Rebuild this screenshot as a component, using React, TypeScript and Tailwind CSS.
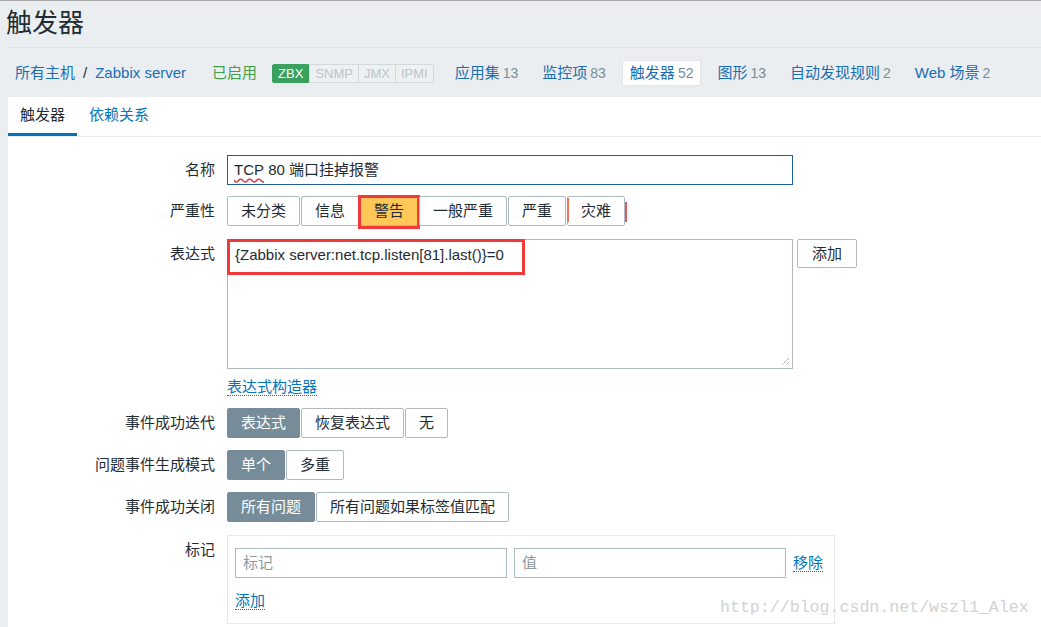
import React from "react";

const font = "font-['Liberation_Sans','Noto_Sans_CJK_SC',sans-serif]";

const navItems = [
  { label: "应用集", count: 13 },
  { label: "监控项", count: 83 },
  { label: "触发器", count: 52, active: true },
  { label: "图形", count: 13 },
  { label: "自动发现规则", count: 2 },
  { label: "Web 场景", count: 2 },
];

const severities = ["未分类", "信息", "警告", "一般严重", "严重", "灾难"];

function Row({
  label,
  className = "",
  children,
}: {
  label: string;
  className?: string;
  children: React.ReactNode;
}) {
  return (
    <div className={`flex items-start ${className}`}>
      <div className="w-[207px] shrink-0 text-right leading-[30px] text-[#1f2c33]">{label}</div>
      <div className="ml-[12px]">{children}</div>
    </div>
  );
}

function Segmented({ options, selected }: { options: string[]; selected: number }) {
  return (
    <div className="flex gap-px">
      {options.map((o, i) => (
        <div
          key={o}
          className={
            i === selected
              ? "h-[30px] rounded-[2px] border border-[#768d99] bg-[#768d99] px-[13px] leading-[28px] text-white"
              : "h-[30px] rounded-[2px] border border-[#acbbc2] bg-white px-[13px] leading-[28px] text-[#1f2c33]"
          }
        >
          {o}
        </div>
      ))}
    </div>
  );
}

function Link({ children }: { children: React.ReactNode }) {
  return (
    <span className="inline-block border-b border-dotted border-[#0275b8] leading-[17px] text-[#0275b8]">
      {children}
    </span>
  );
}

export default function App() {
  return (
    <div className={`relative min-h-screen overflow-hidden border-t border-[#a9a9a9] bg-[#ebeef0] text-[15px] ${font}`}>
      {/* Title */}
      <div className="ml-2 border-b border-[#dde2e5] pt-[4px] pb-[6px]">
        <h1 className="-ml-[2px] text-[26px] leading-[36px] text-[#1f2c33]">触发器</h1>
      </div>

      {/* Host breadcrumb + nav */}
      <div className="flex h-[49px] items-center pt-px pl-[15px] whitespace-nowrap">
        <span className="text-[#1b6db1]">所有主机</span>
        <span className="mx-[8px] text-[#1f2c33]">/</span>
        <span className="text-[#1b6db1]">Zabbix server</span>
        <span className="ml-[26px] text-[#429e47]">已启用</span>
        <div className="ml-[15px] flex text-[13px] leading-[17px]">
          <span className="rounded-l-[2px] border border-[#3aa05d] bg-[#3aa05d] px-[5px] text-white">ZBX</span>
          <span className="border border-[#d3d9dd] bg-[#eef1f2] px-[5px] text-[#bcc5cb]">SNMP</span>
          <span className="-ml-px border border-[#d3d9dd] bg-[#eef1f2] px-[5px] text-[#bcc5cb]">JMX</span>
          <span className="-ml-px rounded-r-[2px] border border-[#d3d9dd] bg-[#eef1f2] px-[5px] text-[#bcc5cb]">IPMI</span>
        </div>
        <div className="ml-[13px] flex gap-[8px]">
          {navItems.map((n) => (
            <div
              key={n.label}
              className={
                n.active
                  ? "rounded-[2px] border border-[#e2e6e8] bg-white px-[7px] py-[3px] leading-[18px]"
                  : "border border-transparent px-[7px] py-[3px] leading-[18px]"
              }
            >
              <span className="text-[#1b6db1]">{n.label}</span>
              <span className="ml-[3px] text-[14px] text-[#768d99]">{n.count}</span>
            </div>
          ))}
        </div>
      </div>

      {/* Main panel */}
      <div className="ml-2 min-h-[560px] bg-white">
        <div className="flex border-b border-[#ebeef0]">
          <div className="flex h-[39px] items-center border-b-[3px] border-[#0275b8] px-[12px] text-[#1f2c33]">触发器</div>
          <div className="flex h-[39px] items-center border-b-[3px] border-transparent px-[12px] text-[#0275b8]">依赖关系</div>
        </div>

        <div className="pt-[18px]">
          <Row label="名称">
            <div className="flex h-[30px] w-[566px] items-center border border-[#1f5f99] pl-[6px] text-[#1f2c33]">
              <span className="underline decoration-[#e53935] decoration-wavy underline-offset-[3px]">TCP</span>
              <span>&nbsp;80 端口挂掉报警</span>
            </div>
          </Row>

          <Row label="严重性" className="mt-[11px]">
            <div className="flex gap-px">
              {severities.map((s) => (
                <div
                  key={s}
                  className={
                    s === "警告"
                      ? "relative h-[30px] rounded-[2px] border border-[#acbbc2] bg-[#ffc859] px-[13px] leading-[28px] text-[#1f2c33]"
                      : "relative h-[30px] rounded-[2px] border border-[#acbbc2] bg-white px-[13px] leading-[28px] text-[#1f2c33]"
                  }
                >
                  {s}
                  {s === "警告" && (
                    <span className="absolute -top-[2px] -right-[3px] -bottom-[4px] -left-[3px] border-[3px] border-[#f03a3a]" />
                  )}
                  {s === "灾难" && (
                    <>
                      <span className="absolute top-[1px] -left-[1px] h-[24px] w-[2px] bg-[#e97659]" />
                      <span className="absolute top-[5px] -right-[3px] h-[20px] w-[2px] bg-[#e45959]" />
                    </>
                  )}
                </div>
              ))}
            </div>
          </Row>

          <Row label="表达式" className="mt-[13px]">
            <div className="flex items-start">
              <div className="relative h-[130px] w-[566px] border border-[#acbbc2] px-[7px] pt-[6px] leading-[18px] text-[#1f2c33]">
                {"{Zabbix server:net.tcp.listen[81].last()}=0"}
                <span className="absolute -top-px -left-px h-[36px] w-[298px] border-[3px] border-[#f03a3a]" />
                <svg className="absolute right-[2px] bottom-[2px]" width="10" height="10" viewBox="0 0 10 10">
                  <path d="M9 2 L2 9 M9 6 L6 9" stroke="#7a7a7a" strokeWidth="1" strokeDasharray="1 1" fill="none" />
                </svg>
              </div>
              <div className="ml-[4px] h-[29px] rounded-[2px] border border-[#acbbc2] bg-white px-[14px] leading-[27px] text-[#1f2c33]">
                添加
              </div>
            </div>
            <div className="mt-[9px] flex">
              <Link>表达式构造器</Link>
            </div>
          </Row>

          <Row label="事件成功迭代" className="mt-[12px]">
            <Segmented options={["表达式", "恢复表达式", "无"]} selected={0} />
          </Row>

          <Row label="问题事件生成模式" className="mt-[12px]">
            <Segmented options={["单个", "多重"]} selected={0} />
          </Row>

          <Row label="事件成功关闭" className="mt-[12px]">
            <Segmented options={["所有问题", "所有问题如果标签值匹配"]} selected={0} />
          </Row>

          <Row label="标记" className="mt-[13px]">
            <div className="w-[608px] border border-[#e6e9eb] pt-[12px] pb-[13px] pl-[7px]">
              <div className="flex items-center gap-[7px]">
                <div className="h-[30px] w-[272px] border border-[#acbbc2] pl-[7px] leading-[28px] text-[#8d989f]">标记</div>
                <div className="h-[30px] w-[272px] border border-[#acbbc2] pl-[7px] leading-[28px] text-[#8d989f]">值</div>
                <Link>移除</Link>
              </div>
              <div className="mt-[14px] flex">
                <Link>添加</Link>
              </div>
            </div>
          </Row>
        </div>
      </div>

      {/* watermark */}
      <div className="absolute top-[597px] left-[720px] font-['Liberation_Mono',monospace] text-[16.6px] leading-[20px] text-[#d2d2d2]">
        http://blog.csdn.net/wszl1_Alex
      </div>
    </div>
  );
}
